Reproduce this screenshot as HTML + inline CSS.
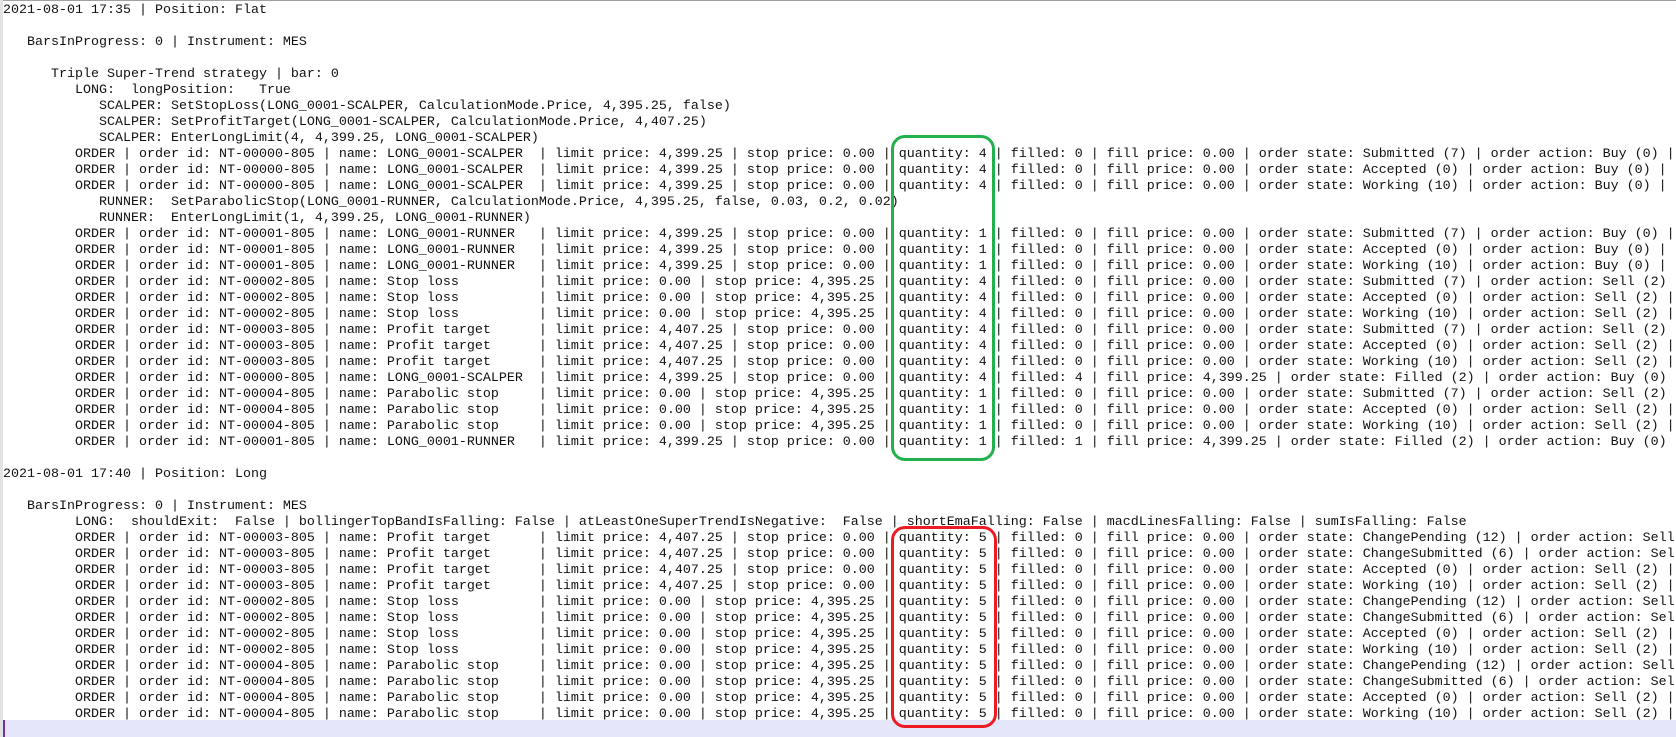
<!DOCTYPE html>
<html><head><meta charset="utf-8"><style>
html,body{margin:0;padding:0;background:#fff;width:1676px;height:737px;overflow:hidden;position:relative}
.top{position:absolute;left:0;top:0;width:1676px;height:1px;background:#a0a0a0}
.left{position:absolute;left:0;top:0;width:3px;height:737px;background:#e3e3e3}
.hl{position:absolute;left:3px;top:720px;width:1673px;height:17px;background:#e6e6fa}
.caret{position:absolute;left:3px;top:720px;width:2px;height:17px;background:#7030a0}
pre{position:absolute;left:3px;top:3px;margin:0;font-family:"Liberation Mono",monospace;font-size:13.33px;line-height:16px;color:#101010;white-space:pre}
.box{position:absolute;border:3px solid;border-radius:14px;box-sizing:border-box}
</style></head><body>
<div class="top"></div><div class="left"></div><div class="hl"></div><div class="caret"></div>
<pre>2021-08-01 17:35 | Position: Flat

   BarsInProgress: 0 | Instrument: MES

      Triple Super-Trend strategy | bar: 0
         LONG:  longPosition:   True
            SCALPER: SetStopLoss(LONG_0001-SCALPER, CalculationMode.Price, 4,395.25, false)
            SCALPER: SetProfitTarget(LONG_0001-SCALPER, CalculationMode.Price, 4,407.25)
            SCALPER: EnterLongLimit(4, 4,399.25, LONG_0001-SCALPER)
         ORDER | order id: NT-00000-805 | name: LONG_0001-SCALPER  | limit price: 4,399.25 | stop price: 0.00 | quantity: 4 | filled: 0 | fill price: 0.00 | order state: Submitted (7) | order action: Buy (0) |
         ORDER | order id: NT-00000-805 | name: LONG_0001-SCALPER  | limit price: 4,399.25 | stop price: 0.00 | quantity: 4 | filled: 0 | fill price: 0.00 | order state: Accepted (0) | order action: Buy (0) |
         ORDER | order id: NT-00000-805 | name: LONG_0001-SCALPER  | limit price: 4,399.25 | stop price: 0.00 | quantity: 4 | filled: 0 | fill price: 0.00 | order state: Working (10) | order action: Buy (0) |
            RUNNER:  SetParabolicStop(LONG_0001-RUNNER, CalculationMode.Price, 4,395.25, false, 0.03, 0.2, 0.02)
            RUNNER:  EnterLongLimit(1, 4,399.25, LONG_0001-RUNNER)
         ORDER | order id: NT-00001-805 | name: LONG_0001-RUNNER   | limit price: 4,399.25 | stop price: 0.00 | quantity: 1 | filled: 0 | fill price: 0.00 | order state: Submitted (7) | order action: Buy (0) |
         ORDER | order id: NT-00001-805 | name: LONG_0001-RUNNER   | limit price: 4,399.25 | stop price: 0.00 | quantity: 1 | filled: 0 | fill price: 0.00 | order state: Accepted (0) | order action: Buy (0) |
         ORDER | order id: NT-00001-805 | name: LONG_0001-RUNNER   | limit price: 4,399.25 | stop price: 0.00 | quantity: 1 | filled: 0 | fill price: 0.00 | order state: Working (10) | order action: Buy (0) |
         ORDER | order id: NT-00002-805 | name: Stop loss          | limit price: 0.00 | stop price: 4,395.25 | quantity: 4 | filled: 0 | fill price: 0.00 | order state: Submitted (7) | order action: Sell (2) |
         ORDER | order id: NT-00002-805 | name: Stop loss          | limit price: 0.00 | stop price: 4,395.25 | quantity: 4 | filled: 0 | fill price: 0.00 | order state: Accepted (0) | order action: Sell (2) |
         ORDER | order id: NT-00002-805 | name: Stop loss          | limit price: 0.00 | stop price: 4,395.25 | quantity: 4 | filled: 0 | fill price: 0.00 | order state: Working (10) | order action: Sell (2) |
         ORDER | order id: NT-00003-805 | name: Profit target      | limit price: 4,407.25 | stop price: 0.00 | quantity: 4 | filled: 0 | fill price: 0.00 | order state: Submitted (7) | order action: Sell (2) |
         ORDER | order id: NT-00003-805 | name: Profit target      | limit price: 4,407.25 | stop price: 0.00 | quantity: 4 | filled: 0 | fill price: 0.00 | order state: Accepted (0) | order action: Sell (2) |
         ORDER | order id: NT-00003-805 | name: Profit target      | limit price: 4,407.25 | stop price: 0.00 | quantity: 4 | filled: 0 | fill price: 0.00 | order state: Working (10) | order action: Sell (2) |
         ORDER | order id: NT-00000-805 | name: LONG_0001-SCALPER  | limit price: 4,399.25 | stop price: 0.00 | quantity: 4 | filled: 4 | fill price: 4,399.25 | order state: Filled (2) | order action: Buy (0) |
         ORDER | order id: NT-00004-805 | name: Parabolic stop     | limit price: 0.00 | stop price: 4,395.25 | quantity: 1 | filled: 0 | fill price: 0.00 | order state: Submitted (7) | order action: Sell (2) |
         ORDER | order id: NT-00004-805 | name: Parabolic stop     | limit price: 0.00 | stop price: 4,395.25 | quantity: 1 | filled: 0 | fill price: 0.00 | order state: Accepted (0) | order action: Sell (2) |
         ORDER | order id: NT-00004-805 | name: Parabolic stop     | limit price: 0.00 | stop price: 4,395.25 | quantity: 1 | filled: 0 | fill price: 0.00 | order state: Working (10) | order action: Sell (2) |
         ORDER | order id: NT-00001-805 | name: LONG_0001-RUNNER   | limit price: 4,399.25 | stop price: 0.00 | quantity: 1 | filled: 1 | fill price: 4,399.25 | order state: Filled (2) | order action: Buy (0) |

2021-08-01 17:40 | Position: Long

   BarsInProgress: 0 | Instrument: MES
         LONG:  shouldExit:  False | bollingerTopBandIsFalling: False | atLeastOneSuperTrendIsNegative:  False | shortEmaFalling: False | macdLinesFalling: False | sumIsFalling: False
         ORDER | order id: NT-00003-805 | name: Profit target      | limit price: 4,407.25 | stop price: 0.00 | quantity: 5 | filled: 0 | fill price: 0.00 | order state: ChangePending (12) | order action: Sell (2) |
         ORDER | order id: NT-00003-805 | name: Profit target      | limit price: 4,407.25 | stop price: 0.00 | quantity: 5 | filled: 0 | fill price: 0.00 | order state: ChangeSubmitted (6) | order action: Sell (2) |
         ORDER | order id: NT-00003-805 | name: Profit target      | limit price: 4,407.25 | stop price: 0.00 | quantity: 5 | filled: 0 | fill price: 0.00 | order state: Accepted (0) | order action: Sell (2) |
         ORDER | order id: NT-00003-805 | name: Profit target      | limit price: 4,407.25 | stop price: 0.00 | quantity: 5 | filled: 0 | fill price: 0.00 | order state: Working (10) | order action: Sell (2) |
         ORDER | order id: NT-00002-805 | name: Stop loss          | limit price: 0.00 | stop price: 4,395.25 | quantity: 5 | filled: 0 | fill price: 0.00 | order state: ChangePending (12) | order action: Sell (2) |
         ORDER | order id: NT-00002-805 | name: Stop loss          | limit price: 0.00 | stop price: 4,395.25 | quantity: 5 | filled: 0 | fill price: 0.00 | order state: ChangeSubmitted (6) | order action: Sell (2) |
         ORDER | order id: NT-00002-805 | name: Stop loss          | limit price: 0.00 | stop price: 4,395.25 | quantity: 5 | filled: 0 | fill price: 0.00 | order state: Accepted (0) | order action: Sell (2) |
         ORDER | order id: NT-00002-805 | name: Stop loss          | limit price: 0.00 | stop price: 4,395.25 | quantity: 5 | filled: 0 | fill price: 0.00 | order state: Working (10) | order action: Sell (2) |
         ORDER | order id: NT-00004-805 | name: Parabolic stop     | limit price: 0.00 | stop price: 4,395.25 | quantity: 5 | filled: 0 | fill price: 0.00 | order state: ChangePending (12) | order action: Sell (2) |
         ORDER | order id: NT-00004-805 | name: Parabolic stop     | limit price: 0.00 | stop price: 4,395.25 | quantity: 5 | filled: 0 | fill price: 0.00 | order state: ChangeSubmitted (6) | order action: Sell (2) |
         ORDER | order id: NT-00004-805 | name: Parabolic stop     | limit price: 0.00 | stop price: 4,395.25 | quantity: 5 | filled: 0 | fill price: 0.00 | order state: Accepted (0) | order action: Sell (2) |
         ORDER | order id: NT-00004-805 | name: Parabolic stop     | limit price: 0.00 | stop price: 4,395.25 | quantity: 5 | filled: 0 | fill price: 0.00 | order state: Working (10) | order action: Sell (2) |</pre>
<div class="box" style="left:891px;top:135px;width:104px;height:326px;border-color:#22b14c"></div>
<div class="box" style="left:891px;top:526px;width:106px;height:202px;border-color:#ed1c24"></div>
</body></html>
